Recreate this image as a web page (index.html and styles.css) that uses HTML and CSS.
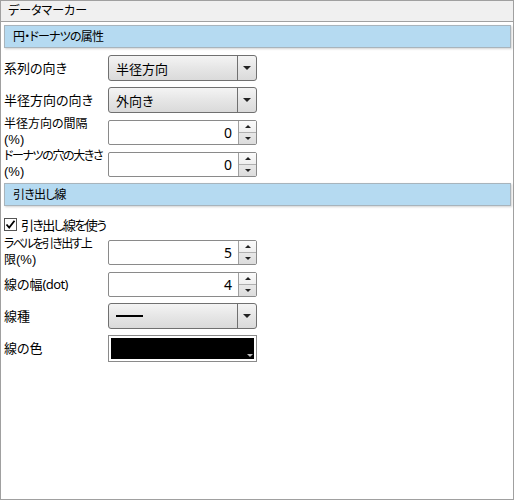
FILE: index.html
```
<!DOCTYPE html>
<html lang="ja">
<head>
<meta charset="utf-8">
<title>データマーカー</title>
<link rel="stylesheet" href="styles.css">
</head>
<body>
<div class="panel">
  <div class="header">データマーカー</div>
  <div class="section">円・ドーナツの属性</div>
  <div class="rows">
    <div class="row">
      <div class="label">系列の向き</div>
      <div class="combo"><span class="combo-text">半径方向</span><span class="combo-btn"><span class="arrow-down"></span></span></div>
    </div>
    <div class="row">
      <div class="label">半径方向の向き</div>
      <div class="combo"><span class="combo-text">外向き</span><span class="combo-btn"><span class="arrow-down"></span></span></div>
    </div>
    <div class="row">
      <div class="label two"><span class="line">半径方向の間隔</span><span class="line latin">(%)</span></div>
      <div class="spin"><span class="spin-value">0</span><span class="spin-btns"><span class="spin-up"><span class="tri-up"></span></span><span class="spin-down"><span class="tri-down"></span></span></span></div>
    </div>
    <div class="row">
      <div class="label two"><span class="line t2">ドーナツの穴の大きさ</span><span class="line latin">(%)</span></div>
      <div class="spin"><span class="spin-value">0</span><span class="spin-btns"><span class="spin-up"><span class="tri-up"></span></span><span class="spin-down"><span class="tri-down"></span></span></span></div>
    </div>
  </div>
  <div class="section section-2">引き出し線</div>
  <div class="rows">
    <div class="check-row">
      <span class="checkbox"><svg width="11" height="11" viewBox="0 0 11 11"><path d="M1.5 5.5 L4.2 8.5 L9.5 1.8" fill="none" stroke="#000" stroke-width="1.8"/></svg></span>
      <span class="check-label">引き出し線を使う</span>
    </div>
    <div class="row">
      <div class="label two"><span class="line t3">ラベルを引き出す上</span><span class="line">限<span class="latin">(%)</span></span></div>
      <div class="spin"><span class="spin-value">5</span><span class="spin-btns"><span class="spin-up"><span class="tri-up"></span></span><span class="spin-down"><span class="tri-down"></span></span></span></div>
    </div>
    <div class="row">
      <div class="label">線の幅<span class="dot">(dot)</span></div>
      <div class="spin"><span class="spin-value">4</span><span class="spin-btns"><span class="spin-up"><span class="tri-up"></span></span><span class="spin-down"><span class="tri-down"></span></span></span></div>
    </div>
    <div class="row">
      <div class="label">線種</div>
      <div class="combo"><span class="combo-text"><span class="line-sample"></span></span><span class="combo-btn"><span class="arrow-down"></span></span></div>
    </div>
    <div class="row">
      <div class="label">線の色</div>
      <div class="color-box"><span class="color-fill"></span><span class="color-arrow"></span></div>
    </div>
  </div>
</div>
</body>
</html>
```
FILE: styles.css
```
html, body {
  margin: 0;
  padding: 0;
  background: #ffffff;
}
body {
  font-family: "Noto Sans", "Noto Sans CJK JP", sans-serif;
  font-size: 13px;
  color: #000;
  font-feature-settings: "palt";
}
.panel {
  box-sizing: border-box;
  width: 514px;
  height: 500px;
  border: 1px solid #a0a0a0;
  background: #fff;
}
.header {
  height: 20px;
  line-height: 20px;
  padding-left: 7px;
  font-size: 12px;
  background: #f0f0f0;
  border-bottom: 1px solid #a0a0a0;
}
.section {
  box-sizing: border-box;
  margin: 3px 2px 0 3px;
  height: 23px;
  line-height: 21px;
  padding-left: 8px;
  font-size: 12px;
  letter-spacing: -0.8px;
  background: #b5daf1;
  border: 1px solid #a8b4bc;
  box-shadow: 1px 1px 2px rgba(0, 0, 0, 0.18);
}
.section-2 {
  margin-top: 3px;
}
.rows {
  padding-left: 3px;
}
.row {
  display: flex;
  align-items: center;
  height: 32px;
}
.section + .rows {
  padding-top: 4px;
}
.section-2 + .rows {
  padding-top: 6px;
}
.label {
  width: 104px;
  line-height: 16px;
  white-space: nowrap;
}
.label.two {
  font-size: 12px;
}
.line {
  display: block;
  height: 16px;
}
.latin {
  font-family: "Liberation Sans", "Noto Sans CJK JP", sans-serif;
  font-size: 13px;
}
.dot {
  letter-spacing: -0.6px;
}
.t2 {
  letter-spacing: -1.4px;
}
.t3 {
  letter-spacing: -1.7px;
}
.combo {
  box-sizing: border-box;
  width: 149px;
  height: 26px;
  display: flex;
  border: 1px solid #707070;
  border-radius: 3px;
  background: linear-gradient(#f4f4f4, #e6e6e6 50%, #dadada);
}
.combo-text {
  flex: 1;
  display: flex;
  align-items: center;
  padding-left: 7px;
}
.combo-btn {
  width: 18px;
  border-left: 1px solid #707070;
  display: flex;
  align-items: center;
  justify-content: center;
}
.arrow-down {
  width: 0;
  height: 0;
  border-left: 4px solid transparent;
  border-right: 4px solid transparent;
  border-top: 4px solid #222;
}
.line-sample {
  display: block;
  width: 27px;
  height: 2px;
  background: #000;
}
.spin {
  box-sizing: border-box;
  width: 149px;
  height: 25px;
  display: flex;
  border: 1px solid #8a8a8a;
  border-radius: 2px;
  background: #fff;
}
.spin-value {
  flex: 1;
  text-align: right;
  padding-right: 6px;
  line-height: 23px;
  font-size: 14px;
}
.spin-btns {
  width: 17px;
  display: flex;
  flex-direction: column;
  border-left: 1px solid #a0a0a0;
}
.spin-up, .spin-down {
  flex: 1;
  display: flex;
  align-items: center;
  justify-content: center;
}
.spin-up {
  background: linear-gradient(#fbfbfb, #efefef);
  border-bottom: 1px solid #b0b0b0;
}
.spin-down {
  background: linear-gradient(#e8e8e8, #dcdcdc);
}
.tri-up {
  width: 0;
  height: 0;
  border-left: 3px solid transparent;
  border-right: 3px solid transparent;
  border-bottom: 3px solid #222;
}
.tri-down {
  width: 0;
  height: 0;
  border-left: 3px solid transparent;
  border-right: 3px solid transparent;
  border-top: 3px solid #222;
}
.check-row {
  display: flex;
  align-items: center;
  height: 24px;
  gap: 4px;
}
.check-label {
  letter-spacing: -1.6px;
}
.checkbox {
  box-sizing: border-box;
  width: 13px;
  height: 13px;
  border: 1px solid #555;
  background: #fff;
  display: flex;
  align-items: center;
  justify-content: center;
}
.checkbox svg {
  display: block;
}
.color-box {
  position: relative;
  box-sizing: border-box;
  width: 149px;
  height: 27px;
  border: 1px solid #8a8a8a;
  padding: 2px;
  background: #fff;
  display: flex;
}
.color-fill {
  flex: 1;
  background: #000;
}
.color-arrow {
  position: absolute;
  right: 2px;
  bottom: 2px;
  width: 0;
  height: 0;
  border-left: 3px solid transparent;
  border-right: 3px solid transparent;
  border-top: 3px solid #bbb;
  margin: 0 1px 2px 0;
}
```
